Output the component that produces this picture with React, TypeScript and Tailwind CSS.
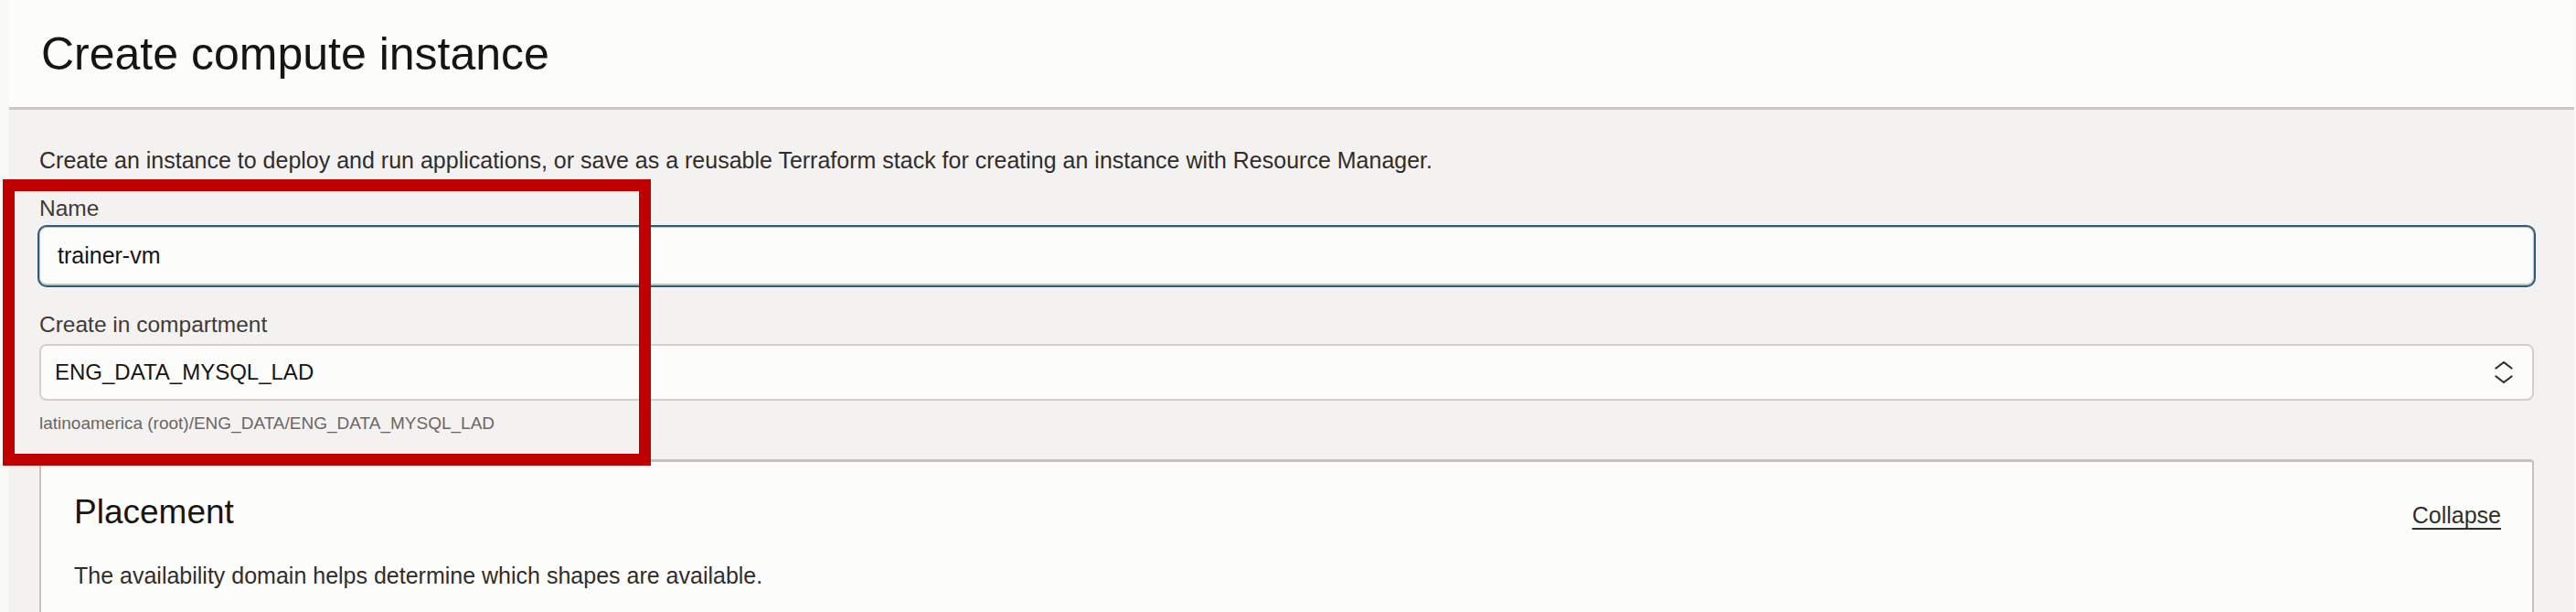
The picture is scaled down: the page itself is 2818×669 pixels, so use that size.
import React from "react";

function UpDownChevron() {
  return (
    <svg width="20" height="26" viewBox="0 0 20 26" fill="none" stroke="#312d2a" strokeWidth="2.2" strokeLinecap="round" strokeLinejoin="round">
      <polyline points="1.5,8.5 10,2 18.5,8.5" />
      <polyline points="1.5,17.5 10,24 18.5,17.5" />
    </svg>
  );
}

export default function App() {
  return (
    <div className="relative h-[669px] w-full overflow-hidden bg-[#f9f9f8] pl-[10px] pr-[2px] font-['Liberation_Sans',Arial,sans-serif]">
      <div className="h-full bg-[#f3f2f1]">
        <header className="flex h-[120px] items-center border-b-[3px] border-[#cbc7c1] bg-[#fcfcfb] pl-[35px]">
          <h1 className="text-[50px] leading-none text-[#161513]">Create compute instance</h1>
        </header>

        <div className="pl-[33px] pr-[44px]">
          <p className="mt-[40px] text-[25px] leading-[30px] text-[#312d2a]">
            Create an instance to deploy and run applications, or save as a reusable Terraform stack for creating an instance with Resource Manager.
          </p>

          <label className="mt-[23px] block text-[24.5px] leading-[30px] text-[#3e3a36]">Name</label>
          <div className="mt-[5px] flex h-[64px] items-center rounded-[8px] border border-b-2 border-[#c5c1bb] bg-[#fcfcfb] pl-[19px] shadow-[0_0_0_2px_#27607e]">
            <span className="text-[25px] text-[#161513]">trainer-vm</span>
          </div>

          <label className="mt-[28px] block text-[24.5px] leading-[30px] text-[#3e3a36]">Create in compartment</label>
          <div className="mt-[6px] flex h-[62px] items-center justify-between rounded-[8px] border-2 border-[#d3cfca] bg-[#fcfcfb] pl-[15px] pr-[21px]">
            <span className="text-[24px] text-[#161513]">ENG_DATA_MYSQL_LAD</span>
            <UpDownChevron />
          </div>
          <p className="mt-[13px] text-[19px] leading-[24px] text-[#6b6661]">
            latinoamerica (root)/ENG_DATA/ENG_DATA_MYSQL_LAD
          </p>

          <section className="mt-[27px] h-[200px] rounded-tr-[4px] border-l-2 border-r-2 border-t-[3px] border-[#c5c1bc] bg-[#fcfcfb] pl-[36px] pr-[34px] pt-[33px]">
            <div className="flex items-baseline justify-between">
              <h2 className="text-[37px] leading-[44px] text-[#161513]">Placement</h2>
              <a className="text-[25px] text-[#312d2a] underline decoration-2 underline-offset-[5px]">Collapse</a>
            </div>
            <p className="mt-[31px] text-[25px] leading-[30px] text-[#312d2a]">
              The availability domain helps determine which shapes are available.
            </p>
          </section>
        </div>
      </div>

      <div className="pointer-events-none absolute left-[3px] top-[196px] h-[313px] w-[709px] border-[13px] border-[#c00000]" />
    </div>
  );
}
